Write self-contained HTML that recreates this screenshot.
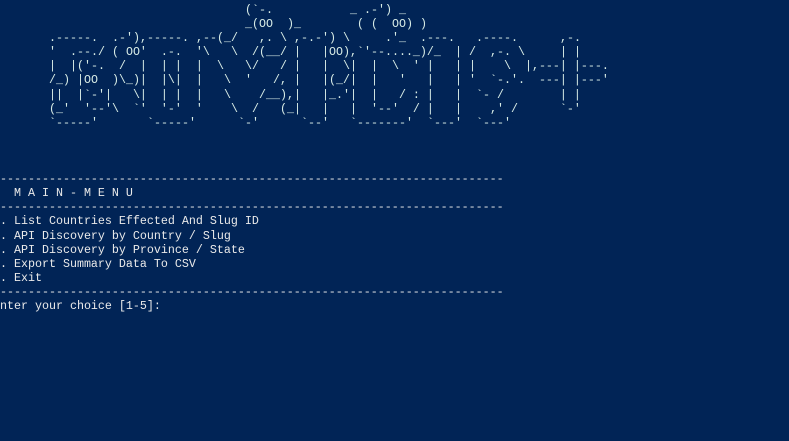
<!DOCTYPE html>
<html><head><meta charset="utf-8"><style>
html,body{margin:0;padding:0;background:#012456;width:789px;height:441px;overflow:hidden}
.a,pre{font-family:"Liberation Mono",monospace;font-size:11.67px;line-height:14px;white-space:pre}
.row{position:absolute;left:0;height:14px;width:789px;color:#d8ece6}
.row span{position:absolute;top:0}
pre{position:absolute;left:0;margin:0;line-height:14.15px;top:172px;color:#eaeaea}
</style></head><body>
<div class="a">
<div class="row" style="top:3px"><span style="left:245px">(`-.</span><span style="left:350px">_ .-') _</span></div>
<div class="row" style="top:17px"><span style="left:245px">_(OO  )_</span><span style="left:357px">( (  OO) )</span></div>
<div class="row" style="top:31px"><span style="left:49px">.-----.</span><span style="left:112px">.-'),-----.</span><span style="left:196px">,--(_/</span><span style="left:259px">,. \</span><span style="left:294px">,-.-')</span><span style="left:343px">\</span><span style="left:385px">.'_</span><span style="left:420px">.---.</span><span style="left:476px">.----.</span><span style="left:560px">,-.</span></div>
<div class="row" style="top:45px"><span style="left:49px">'  .--./ ( OO'  .-.  '\</span><span style="left:231px">\</span><span style="left:252px">/(__/ |</span><span style="left:322px">|OO),`'--...._)/_</span><span style="left:455px">| /  ,-. \</span><span style="left:560px">| |</span></div>
<div class="row" style="top:59px"><span style="left:49px">|  |('-.  /  |  | |  |</span><span style="left:217px">\   \/   / |</span><span style="left:322px">|  \|  |  \  ' |</span><span style="left:455px">| |    \  |,---| |---.</span></div>
<div class="row" style="top:73px"><span style="left:49px">/_) |OO  )\_)|  |\|  |</span><span style="left:224px">\  '   /, |</span><span style="left:322px">|(_/|  |   '   |</span><span style="left:455px">| '  `-.'.  ---| |---'</span></div>
<div class="row" style="top:88px"><span style="left:49px">||  |`-'|   \|  | |  |</span><span style="left:224px">\    /__),|</span><span style="left:322px">|_.'|  |   / : |</span><span style="left:455px">|  `- /        | |</span></div>
<div class="row" style="top:102px"><span style="left:49px">(_'  '--'\  `'  '-'  '</span><span style="left:231px">\  /   (_|</span><span style="left:322px">|   |  '--'  / |</span><span style="left:455px">|    ,' /      `-'</span></div>
<div class="row" style="top:116px"><span style="left:49px">`-----'</span><span style="left:147px">`-----'</span><span style="left:238px">`-'</span><span style="left:301px">`--'</span><span style="left:350px">`-------'</span><span style="left:427px">`---'</span><span style="left:476px">`---'</span></div>
</div>
<pre>------------------------------------------------------------------------
  M A I N - M E N U
------------------------------------------------------------------------
. List Countries Effected And Slug ID
. API Discovery by Country / Slug
. API Discovery by Province / State
. Export Summary Data To CSV
. Exit
------------------------------------------------------------------------
nter your choice [1-5]:</pre>
</body></html>
